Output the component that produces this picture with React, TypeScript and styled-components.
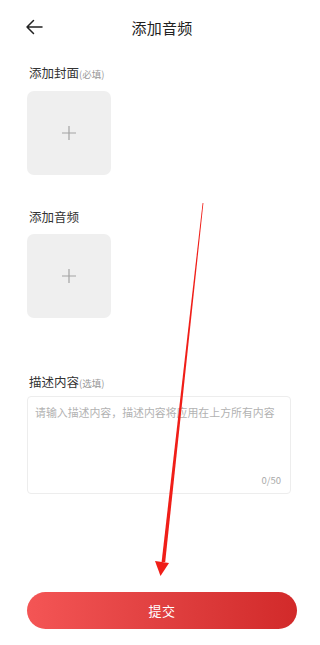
import React, { useState } from "react";
import styled, { createGlobalStyle } from "styled-components";

const GlobalStyle = createGlobalStyle`
  html, body {
    margin: 0;
    padding: 0;
    background: #ffffff;
    font-family: "Noto Sans CJK SC", "Noto Sans", Roboto, sans-serif;
  }
  * { box-sizing: border-box; }
`;

const Page = styled.div`
  position: relative;
  width: 311px;
  height: 645px;
  background: #fff;
  overflow: hidden;
`;

const Header = styled.div`
  position: relative;
  height: 54px;
  padding-left: 13px;
  display: flex;
  align-items: center;
  justify-content: center;
`;

const BackButton = styled.button`
  position: absolute;
  left: 22px;
  top: 17px;
  width: 24px;
  height: 20px;
  padding: 0;
  border: none;
  background: none;
  display: flex;
  align-items: center;
  justify-content: center;
`;

const Title = styled.h1`
  margin: 0;
  font-size: 15px;
  font-weight: 400;
  color: #222;
  letter-spacing: 0.2px;
`;

const Content = styled.div`
  padding: 0 20px 0 27px;
  display: flex;
  flex-direction: column;
`;

const Label = styled.div<{ $top: number }>`
  margin-top: ${(p) => p.$top}px;
  padding-left: 2px;
  font-size: 12.5px;
  line-height: 18px;
  color: #333;
`;

const Hint = styled.span`
  font-size: 9.5px;
  color: #999;
`;

const UploadBox = styled.div`
  margin-top: 8px;
  width: 84px;
  height: 84px;
  border-radius: 7px;
  background: #efefef;
  display: flex;
  align-items: center;
  justify-content: center;
`;

const TextBox = styled.div`
  margin-top: 4px;
  height: 98px;
  border: 1px solid #ededed;
  border-radius: 4px;
  padding: 7px 7px 6px 7px;
  display: flex;
  flex-direction: column;
`;

const TextInput = styled.textarea`
  flex: 1;
  border: none;
  outline: none;
  resize: none;
  padding: 0;
  font-family: inherit;
  font-size: 10.9px;
  line-height: 16px;
  color: #333;
  &::placeholder {
    color: #b2b2b2;
  }
`;

const Counter = styled.div`
  align-self: flex-end;
  font-size: 9.5px;
  color: #aaa;
  padding-right: 2px;
`;

const SubmitButton = styled.button`
  margin: 98px -6px 0 0;
  height: 37px;
  border: none;
  border-radius: 19px;
  background: linear-gradient(90deg, #f45555 0%, #e04040 50%, #d22a2a 100%);
  color: #fff;
  font-family: inherit;
  font-size: 13px;
  letter-spacing: 0.5px;
`;

const Annotation = styled.svg`
  position: absolute;
  left: 0;
  top: 0;
  pointer-events: none;
`;

const Plus = () => (
  <svg width="16" height="16" viewBox="0 0 16 16">
    <path d="M8 1v14M1 8h14" stroke="#a3a3a3" strokeWidth="1.2" />
  </svg>
);

export default function App() {
  const [desc, setDesc] = useState("");
  return (
    <Page>
      <GlobalStyle />
      <Header>
        <BackButton aria-label="返回">
          <svg width="18" height="16" viewBox="0 0 18 16">
            <path
              d="M17 8H2M8.5 1.5L2 8l6.5 6.5"
              fill="none"
              stroke="#222"
              strokeWidth="1.5"
              strokeLinecap="round"
              strokeLinejoin="round"
            />
          </svg>
        </BackButton>
        <Title>添加音频</Title>
      </Header>
      <Content>
        <Label $top={10}>
          添加封面<Hint>(必填)</Hint>
        </Label>
        <UploadBox>
          <Plus />
        </UploadBox>
        <Label $top={33}>添加音频</Label>
        <UploadBox>
          <Plus />
        </UploadBox>
        <Label $top={55}>
          描述内容<Hint>(选填)</Hint>
        </Label>
        <TextBox>
          <TextInput
            maxLength={50}
            value={desc}
            onChange={(e) => setDesc(e.target.value)}
            placeholder="请输入描述内容，描述内容将应用在上方所有内容"
          />
          <Counter>{desc.length}/50</Counter>
        </TextBox>
        <SubmitButton>提交</SubmitButton>
      </Content>
      <Annotation width="311" height="645" viewBox="0 0 311 645">
        <polygon points="202.6,203 203.4,203 165.2,562 161.6,562" fill="#f01e18" />
        <polygon points="155,561 169,563 160.5,576" fill="#f01e18" />
      </Annotation>
    </Page>
  );
}
